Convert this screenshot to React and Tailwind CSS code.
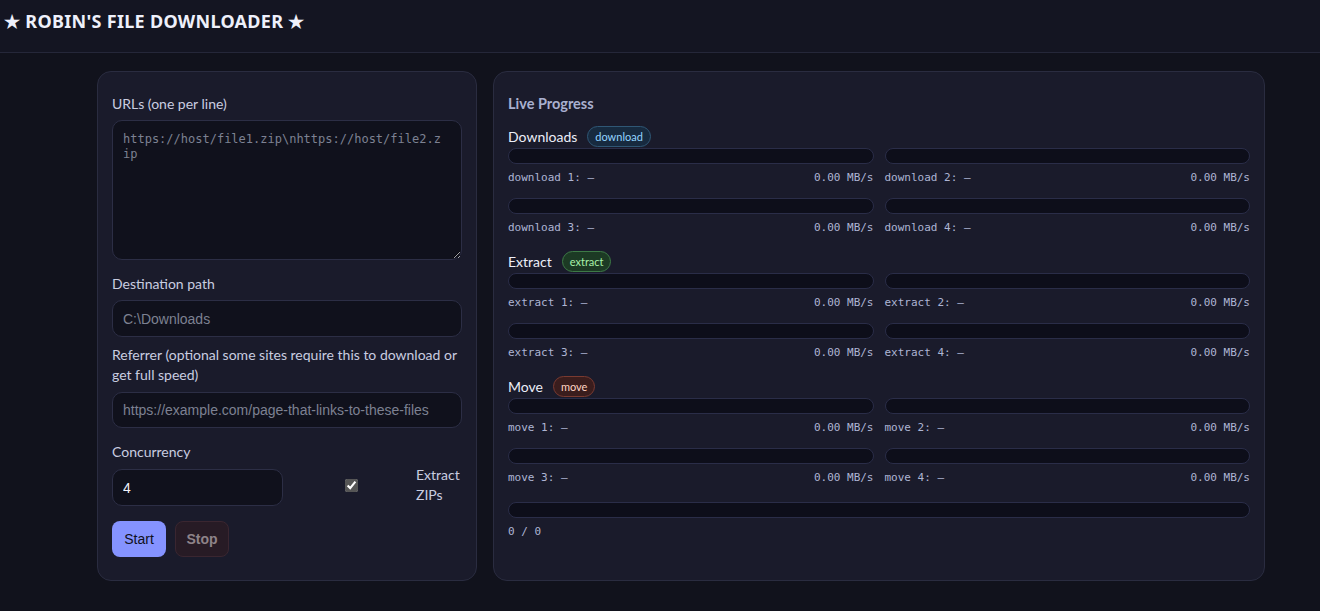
import React from "react";

const sans = { fontFamily: 'Lato, "Noto Sans", sans-serif' };

function Bar() {
  return <div className="h-4 rounded-full border border-[#2a2d48] bg-[#0d0e1a]" />;
}

function Item({ name }) {
  return (
    <div>
      <Bar />
      <div className="mt-[6px] flex justify-between font-['DejaVu_Sans_Mono',monospace] text-[11px] leading-4 text-[#aeb5d4]">
        <span>{name}: –</span>
        <span>0.00 MB/s</span>
      </div>
    </div>
  );
}

function Section({ title, badge, badgeCls, prefix, first }) {
  return (
    <div className={first ? "mt-[11px]" : "mt-[14px]"}>
      <div className="mb-px flex h-[22px] items-center gap-[10px]">
        <span className="text-[14px] text-[#eceef8]">{title}</span>
        <span className={"rounded-full border px-[7px] text-[11px] leading-[19px] " + badgeCls}>{badge}</span>
      </div>
      <div className="grid grid-cols-2 gap-x-[11px] gap-y-3">
        {[1, 2, 3, 4].map((n) => (
          <Item key={n} name={`${prefix} ${n}`} />
        ))}
      </div>
    </div>
  );
}

export default function App() {
  return (
    <div className="min-h-[611px] bg-[#11121c] text-[#c9cde0]" style={sans}>
      <header className="flex h-[53px] items-center border-b border-[#252739] bg-[#141522] px-1">
        <h1 className="-mt-[10px] font-['Noto_Sans',sans-serif] text-[18px] font-bold tracking-[0.3px] text-[#eef0fb]">★ ROBIN'S FILE DOWNLOADER ★</h1>
      </header>
      <main className="flex gap-[16px] pl-[97px] pt-[18px]">
        <section className="w-[380px] rounded-[14px] border border-[#2a2c40] bg-[#1a1b2b] px-[14px] pb-[23px] pt-[22px]">
          <label className="block text-[14px] leading-5 text-[#c9cde0]">URLs (one per line)</label>
          <textarea
            className="mt-[6px] block h-[140px] w-full resize-y rounded-[10px] border border-[#2c2e45] bg-[#10111c] pl-[10px] pr-[14px] pt-[11px] font-['DejaVu_Sans_Mono',monospace] text-[12px] leading-[15px] text-[#c9cde0] placeholder:text-[#7d8192] outline-none"
            placeholder="https://host/file1.zip\nhttps://host/file2.zip"
          />
          <label className="mt-[14px] block text-[14px] leading-5">Destination path</label>
          <input
            className="mt-[6px] block h-[37px] w-full rounded-[10px] border border-[#2c2e45] bg-[#10111c] px-[10px] font-['Liberation_Sans',sans-serif] text-[14px] text-[#c9cde0] placeholder:text-[#7d8192] outline-none"
            placeholder="C:\Downloads"
          />
          <label className="mt-[8px] block whitespace-nowrap text-[14px] leading-5">
            Referrer (optional some sites require this to download or
            <br />
            get full speed)
          </label>
          <input
            className="mt-[7px] block h-[36px] w-full rounded-[10px] border border-[#2c2e45] bg-[#10111c] px-[10px] font-['Liberation_Sans',sans-serif] text-[14px] text-[#c9cde0] placeholder:text-[#7d8192] outline-none"
            placeholder="https://example.com/page-that-links-to-these-files"
          />
          <label className="mt-[14px] block text-[14px] leading-5">Concurrency</label>
          <div className="mt-[7px] flex items-start">
            <input
              className="block h-[37px] w-[171px] rounded-[10px] border border-[#2c2e45] bg-[#10111c] px-[10px] font-['Liberation_Sans',sans-serif] text-[14px] text-[#f2f3fa] outline-none"
              defaultValue="4"
            />
            <input type="checkbox" defaultChecked className="ml-[62px] mt-[10px] h-[13px] w-[13px] accent-[#555]" />
            <span className="-mt-[4px] ml-[58px] w-[46px] text-[14px] leading-5">Extract ZIPs</span>
          </div>
          <div className="mt-[15px] flex gap-[9px] font-['Liberation_Sans',sans-serif]">
            <button className="h-[36px] w-[54px] rounded-[8px] bg-[#8593ff] text-[14px] text-[#0f1020]">Start</button>
            <button className="h-[36px] w-[54px] rounded-[8px] border border-[#3a2630] bg-[#271b25] text-[14px] font-bold text-[#8e8389]">Stop</button>
          </div>
        </section>
        <section className="w-[772px] rounded-[14px] border border-[#2a2c40] bg-[#1a1b2b] px-[14px] pt-[22px]">
          <div className="text-[14.5px] font-bold leading-5 text-[#a9b0cf]">Live Progress</div>
          <Section first title="Downloads" badge="download" prefix="download" badgeCls="border-[#2f5775] bg-[#172a3f] text-[#93d5ff]" />
          <Section title="Extract" badge="extract" prefix="extract" badgeCls="border-[#3d7a46] bg-[#1c3a24] text-[#a8f2a9]" />
          <Section title="Move" badge="move" prefix="move" badgeCls="border-[#7a3a30] bg-[#3a1d1d] text-[#ffd4c4]" />
          <div className="mt-[16px]">
            <Bar />
            <div className="mt-[6px] font-['DejaVu_Sans_Mono',monospace] text-[11px] leading-4 text-[#aeb5d4]">0 / 0</div>
          </div>
        </section>
      </main>
    </div>
  );
}
